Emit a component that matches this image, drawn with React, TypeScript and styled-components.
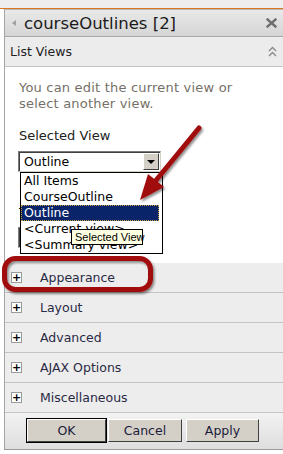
import React from "react";
import styled, { createGlobalStyle } from "styled-components";

const Global = createGlobalStyle`
  html, body { margin: 0; padding: 0; background: #fff; }
  body { font-family: "DejaVu Sans", Verdana, sans-serif; width: 283px; height: 454px; overflow: hidden; position: relative; }
`;

const Page = styled.div`
  position: relative;
  width: 283px;
  height: 454px;
  display: flex;
  flex-direction: column;
`;

const TopStrip = styled.div`
  height: 8px;
  background: #eeeeee;
  border-bottom: 1px solid #d9781e;
`;

const Panel = styled.div`
  margin-left: 4px;
  border-left: 1px solid #a5a5a5;
  border-bottom: 1px solid #9a9a9a;
  display: flex;
  flex-direction: column;
`;

const Header = styled.div`
  height: 26px;
  border-top: 1px solid #b8b8b8;
  border-bottom: 1px solid #a8a8a8;
  background: linear-gradient(#e9e9e9, #d5d5d5);
  display: flex;
  align-items: center;
  padding: 0 6px 0 6px;
  gap: 6px;
`;

const Triangle = styled.span`
  width: 0;
  height: 0;
  border-top: 3px solid transparent;
  border-bottom: 3px solid transparent;
  border-right: 4px solid #a0a0a0;
  margin-left: 1px;
  margin-right: 2px;
`;

const Title = styled.div`
  flex: 1;
  font-size: 16.5px;
  color: #1a1a1a;
  white-space: nowrap;
`;

const IconBox = styled.span`
  display: flex;
  align-items: center;
`;

const SubBar = styled.div`
  height: 29px;
  background: #ececec;
  border-bottom: 1px solid #c4c4c4;
  display: flex;
  align-items: center;
  padding: 0 6px 0 5px;
  font-size: 12.5px;
  color: #222;
`;

const SubTitle = styled.div`
  flex: 1;
`;

const Content = styled.div`
  height: 196px;
  padding: 13px 0 0 14px;
  box-sizing: border-box;
  background: #fff;
  display: flex;
  flex-direction: column;
  align-items: flex-start;
`;

const Desc = styled.div`
  font-size: 13px;
  letter-spacing: 0.2px;
  line-height: 16px;
  color: #757068;
  width: 236px;
`;

const Label = styled.div<{ $top?: number }>`
  font-size: 13px;
  line-height: 16px;
  color: #222;
  margin-top: ${(p) => p.$top ?? 0}px;
`;

const SelectWrap = styled.div<{ $top?: number }>`
  position: relative;
  margin-top: ${(p) => p.$top ?? 0}px;
  margin-left: -1px;
`;

const SelectBox = styled.div<{ $w: number }>`
  width: ${(p) => p.$w}px;
  height: 21px;
  box-sizing: border-box;
  border: 1px solid #7a7a7a;
  border-right-color: #d4d0c8;
  border-bottom-color: #d4d0c8;
  box-shadow: inset 1px 1px 0 #404040;
  background: #fff;
  display: flex;
  align-items: center;
  padding-left: 5px;
  font-size: 12.5px;
  color: #000;
`;

const SelectText = styled.span`
  flex: 1;
`;

const DropButton = styled.span`
  width: 16px;
  height: 17px;
  margin-right: 1px;
  box-sizing: border-box;
  background: #d4d0c8;
  border: 1px solid #fff;
  border-right-color: #404040;
  border-bottom-color: #404040;
  display: flex;
  align-items: center;
  justify-content: center;
  &::after {
    content: "";
    border-left: 4px solid transparent;
    border-right: 4px solid transparent;
    border-top: 4px solid #000;
  }
`;

const LinkText = styled.div`
  font-size: 12px;
  line-height: 16px;
  color: #0066b3;
  margin-top: 5px;
`;

const List = styled.ul`
  position: absolute;
  left: 2px;
  top: 21px;
  width: 141px;
  margin: 0;
  padding: 0;
  list-style: none;
  border: 1px solid #000;
  background: #fff;
  z-index: 2;
`;

const Item = styled.li<{ $sel?: boolean }>`
  height: 16px;
  line-height: 16px;
  font-size: 12.5px;
  padding-left: 3px;
  margin-right: 3px;
  box-sizing: border-box;
  white-space: nowrap;
  color: ${(p) => (p.$sel ? "#fff" : "#000")};
  background: ${(p) => (p.$sel ? "#0a246a" : "transparent")};
  outline: ${(p) => (p.$sel ? "1px dotted #c8a040" : "none")};
  outline-offset: -1px;
`;

const Tooltip = styled.div`
  position: absolute;
  left: 71px;
  top: 229px;
  width: 72px;
  height: 16px;
  box-sizing: border-box;
  padding: 0 0 0 3px;
  border: 1px solid #000;
  background: #ffffe1;
  font-family: "Liberation Sans", Arial, sans-serif;
  font-size: 11px;
  line-height: 14px;
  white-space: nowrap;
  color: #000;
  z-index: 3;
`;

const Section = styled.div`
  height: 30px;
  box-sizing: border-box;
  background: #ededed;
  border-bottom: 1px solid #c4c4c4;
  display: flex;
  align-items: center;
  padding-left: 6px;
  gap: 18px;
  font-size: 12.5px;
  color: #2a2a44;
`;

const PlusBox = styled.span`
  width: 11px;
  height: 11px;
  box-sizing: border-box;
  border: 1px solid #9a9a9a;
  background: #fff;
  display: flex;
  align-items: center;
  justify-content: center;
  font-size: 11px;
  font-weight: bold;
  line-height: 1;
  color: #000;
`;

const ButtonBar = styled.div`
  height: 36px;
  background: linear-gradient(#f2f2f2, #dedede);
  display: flex;
  align-items: center;
  padding-left: 22px;
  padding-bottom: 2px;
  box-sizing: border-box;
  gap: 2px;
`;

const Btn = styled.button<{ $w: number; $def?: boolean }>`
  width: ${(p) => p.$w}px;
  height: 23px;
  box-sizing: border-box;
  background: #d4d0c8;
  border: 1px solid #ffffff;
  border-right-color: #404040;
  border-bottom-color: #404040;
  ${(p) => (p.$def ? "outline: 1px solid #000; outline-offset: 0;" : "")}
  font-family: "DejaVu Sans", Verdana, sans-serif;
  font-size: 12.5px;
  color: #1c1c3a;
  padding: 0;
  &:last-child { margin-left: 2px; }
`;

const Overlay = styled.svg`
  position: absolute;
  left: 0;
  top: 0;
  pointer-events: none;
  z-index: 5;
`;

const sections = ["Appearance", "Layout", "Advanced", "AJAX Options", "Miscellaneous"];
const items = ["All Items", "CourseOutline", "Outline", "<Current view>", "<Summary view>"];

export default function App() {
  return (
    <Page>
      <Global />
      <TopStrip />
      <Panel>
        <Header>
          <Triangle />
          <Title>courseOutlines [2]</Title>
          <IconBox>
            <svg width="11" height="10" viewBox="0 0 11 10">
              <path d="M1.5 1.5 L9.5 8.5 M9.5 1.5 L1.5 8.5" stroke="#6f6f6f" strokeWidth="2.4" strokeLinecap="square" />
            </svg>
          </IconBox>
        </Header>
        <SubBar>
          <SubTitle>List Views</SubTitle>
          <IconBox>
            <svg width="9" height="11" viewBox="0 0 9 11">
              <path d="M1 5 L4.5 1.5 L8 5 M1 10 L4.5 6.5 L8 10" stroke="#8a8a8a" strokeWidth="1.4" fill="none" />
            </svg>
          </IconBox>
        </SubBar>
        <Content>
          <Desc>You can edit the current view or select another view.</Desc>
          <Label $top={16}>Selected View</Label>
          <SelectWrap $top={7}>
            <SelectBox $w={143}>
              <SelectText>Outline</SelectText>
              <DropButton />
            </SelectBox>
            <List>
              {items.map((it, i) => (
                <Item key={it} $sel={i === 2}>{it}</Item>
              ))}
            </List>
          </SelectWrap>
          <LinkText>Edit the current view</LinkText>
          <Label $top={12}>Toolbar Type</Label>
          <SelectWrap $top={6}>
            <SelectBox $w={143}>
              <SelectText>Full Toolbar</SelectText>
              <DropButton />
            </SelectBox>
          </SelectWrap>
        </Content>
        {sections.map((s) => (
          <Section key={s}>
            <PlusBox>+</PlusBox>
            <span>{s}</span>
          </Section>
        ))}
        <ButtonBar>
          <Btn $w={79} $def>OK</Btn>
          <Btn $w={74}>Cancel</Btn>
          <Btn $w={73}>Apply</Btn>
        </ButtonBar>
      </Panel>
      <Tooltip>Selected View</Tooltip>
      <Overlay width="283" height="454" viewBox="0 0 283 454">
        <defs>
          <filter id="sh" x="-20%" y="-20%" width="140%" height="140%">
            <feDropShadow dx="1.5" dy="2" stdDeviation="1.2" floodColor="#000" floodOpacity="0.45" />
          </filter>
        </defs>
        <g filter="url(#sh)">
          <line x1="199" y1="128" x2="153" y2="184" stroke="#a10f0f" strokeWidth="5" strokeLinecap="round" />
          <polygon points="140,200 148,174 164,187" fill="#a10f0f" />
          <rect x="4.5" y="258.5" width="146" height="31" rx="11" fill="none" stroke="#a10f0f" strokeWidth="5" />
        </g>
      </Overlay>
    </Page>
  );
}
